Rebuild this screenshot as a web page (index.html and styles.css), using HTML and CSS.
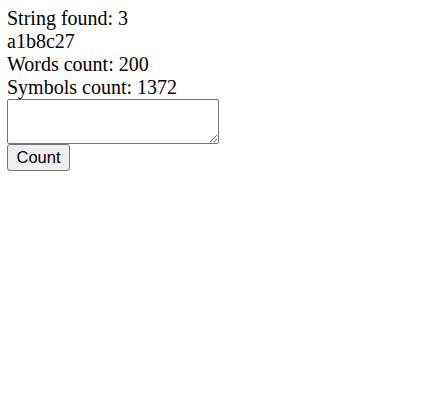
FILE: index.html
```html
<!DOCTYPE html>
<html>
<head>
<meta charset="utf-8">
<link rel="stylesheet" href="styles.css">
</head>
<body>
<div class="line">String found: 3</div>
<div class="line">a1b8c27</div>
<div class="line">Words count: 200</div>
<div class="line">Symbols count: 1372</div>
<textarea class="input"></textarea>
<button class="btn">Count</button>
</body>
</html>
```
FILE: styles.css
```css
html, body { background: #fff; }
body {
  margin: 7px;
  font-family: "Liberation Serif", "Times New Roman", serif;
  font-size: 20px;
  color: #000;
}
.line {
  line-height: 23px;
  height: 23px;
}
.input {
  display: block;
  box-sizing: border-box;
  width: 212px;
  height: 45px;
  margin: 0;
  border: 1px solid #767676;
  border-radius: 2px;
  padding: 2px;
  font-family: "Liberation Mono", monospace;
  font-size: 16px;
  background: #fff;
}
.btn {
  display: block;
  box-sizing: border-box;
  width: 63px;
  height: 27px;
  margin: 0;
  padding: 0;
  border: 1px solid #767676;
  border-radius: 3px;
  background: #efefef;
  font-family: "Liberation Sans", Arial, sans-serif;
  font-size: 16.5px;
  color: #000;
}
```
